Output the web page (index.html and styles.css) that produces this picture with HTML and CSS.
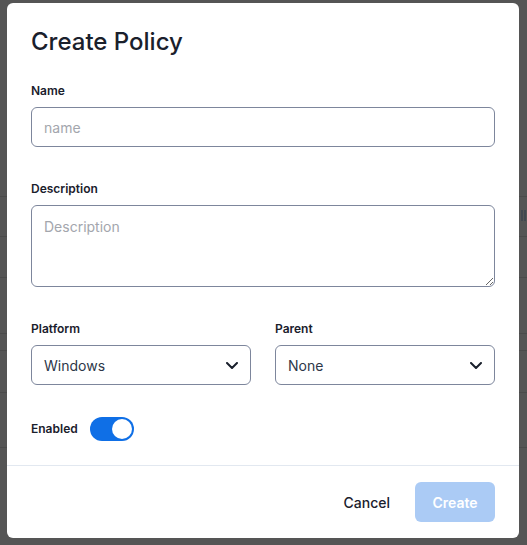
FILE: index.html
```html
<!DOCTYPE html>
<html lang="en">
<head>
<meta charset="utf-8">
<title>Create Policy</title>
<link rel="stylesheet" href="styles.css">
</head>
<body>
<div class="backdrop">
  <div class="bg-row r1"></div>
  <div class="bg-row r2"><span class="bg-mark"></span></div>
  <div class="bg-row r3"></div>
  <div class="bg-row r4"></div>
  <div class="bg-row r5"></div>
  <div class="bg-row r6"></div>
  <div class="bg-row r7"></div>
</div>

<div class="modal">
  <h1 class="modal-title">Create Policy</h1>
  <div class="modal-body">
    <div class="field field-name">
      <label class="label" for="name">Name</label>
      <input class="input" id="name" type="text" placeholder="name">
    </div>
    <div class="field field-desc">
      <label class="label" for="desc">Description</label>
      <textarea class="textarea" id="desc" placeholder="Description"></textarea>
    </div>
    <div class="field-row">
      <div class="field">
        <label class="label">Platform</label>
        <div class="select">
          <span class="select-value">Windows</span>
          <svg class="chevron" width="12" height="7" viewBox="0 0 12 7"><path d="M1 1l5 5 5-5" fill="none" stroke="#1a202c" stroke-width="2" stroke-linecap="round" stroke-linejoin="round"/></svg>
        </div>
      </div>
      <div class="field">
        <label class="label">Parent</label>
        <div class="select">
          <span class="select-value">None</span>
          <svg class="chevron" width="12" height="7" viewBox="0 0 12 7"><path d="M1 1l5 5 5-5" fill="none" stroke="#1a202c" stroke-width="2" stroke-linecap="round" stroke-linejoin="round"/></svg>
        </div>
      </div>
    </div>
    <div class="switch-row">
      <span class="label switch-label">Enabled</span>
      <span class="switch"><span class="knob"></span></span>
    </div>
  </div>
  <div class="modal-footer">
    <button class="btn btn-ghost">Cancel</button>
    <button class="btn btn-primary">Create</button>
  </div>
</div>
</body>
</html>
```

FILE: styles.css
```css
* { box-sizing: border-box; }

html, body {
  margin: 0;
  padding: 0;
}

body {
  width: 527px;
  height: 545px;
  overflow: hidden;
  background: #555555;
  font-family: Inter, "Noto Sans", "Liberation Sans", sans-serif;
  color: #1a202c;
  position: relative;
}

.bg-row {
  border-bottom: 1px solid #4b4b4b;
  position: relative;
}
.r1 { height: 197px; }
.r2 { height: 40px; }
.r3 { height: 41px; }
.r4 { height: 56px; }
.r5 { height: 17px; }
.r6 { height: 42px; }
.r7 { height: 55px; }

.bg-mark {
  position: absolute;
  left: 521px;
  top: 13px;
  width: 5px;
  height: 11px;
  border-left: 2px solid #3e4550;
  border-right: 2px solid #3e4550;
  opacity: 0.8;
}

.modal {
  position: absolute;
  left: 7px;
  top: 3px;
  width: 512px;
  height: 535px;
  background: #ffffff;
  border-radius: 6px;
  display: flex;
  flex-direction: column;
}

.modal-title {
  margin: 0;
  padding: 23px 24px 0;
  font-size: 24px;
  line-height: 32px;
  font-weight: 500;
  color: #1a202c;
}

.modal-body {
  padding: 25px 24px 24px;
  flex: 1;
}

.label {
  display: block;
  font-size: 12px;
  line-height: 16px;
  font-weight: 600;
  color: #1a202c;
  margin-bottom: 8px;
}

.field-desc { margin-top: 34px; }

.input,
.textarea,
.select {
  display: block;
  width: 100%;
  border: 1px solid #7d869c;
  border-radius: 6px;
  background: #fff;
  font-family: Inter, "Noto Sans", "Liberation Sans", sans-serif;
  font-size: 14px;
  color: #2d3748;
  padding: 0 12px;
  outline: none;
}

.input { height: 40px; }

.textarea {
  height: 82px;
  padding-top: 12px;
  resize: vertical;
  line-height: 18px;
}

.input::placeholder,
.textarea::placeholder {
  color: #a3a6ad;
}

.field-row {
  margin-top: 34px;
  display: grid;
  grid-template-columns: 1fr 1fr;
  column-gap: 24px;
}

.select {
  height: 40px;
  display: flex;
  align-items: center;
  justify-content: space-between;
  padding: 0 12px;
}

.select-value {
  font-size: 14px;
  color: #2d3748;
}

.chevron { display: block; margin-top: 1px; }

.switch-row {
  margin-top: 32px;
  display: flex;
  align-items: center;
  gap: 12px;
  height: 24px;
}

.switch-label { margin: 0; }

.switch {
  width: 44px;
  height: 24px;
  border-radius: 12px;
  background: #0f6fe6;
  padding: 2px;
  display: flex;
  justify-content: flex-end;
}

.knob {
  width: 20px;
  height: 20px;
  border-radius: 50%;
  background: #fff;
}

.modal-footer {
  border-top: 1px solid #e2e8f0;
  padding: 16px 24px;
  display: flex;
  justify-content: flex-end;
  gap: 9px;
}

.btn {
  height: 40px;
  padding: 0 16px;
  border: none;
  border-radius: 6px;
  font-family: Inter, "Noto Sans", "Liberation Sans", sans-serif;
  font-size: 14px;
  cursor: pointer;
}

.btn-ghost {
  background: transparent;
  color: #1a202c;
  font-weight: 500;
}

.btn-primary {
  background: #abcbf5;
  color: #ffffff;
  font-weight: 600;
  width: 80px;
}
```
